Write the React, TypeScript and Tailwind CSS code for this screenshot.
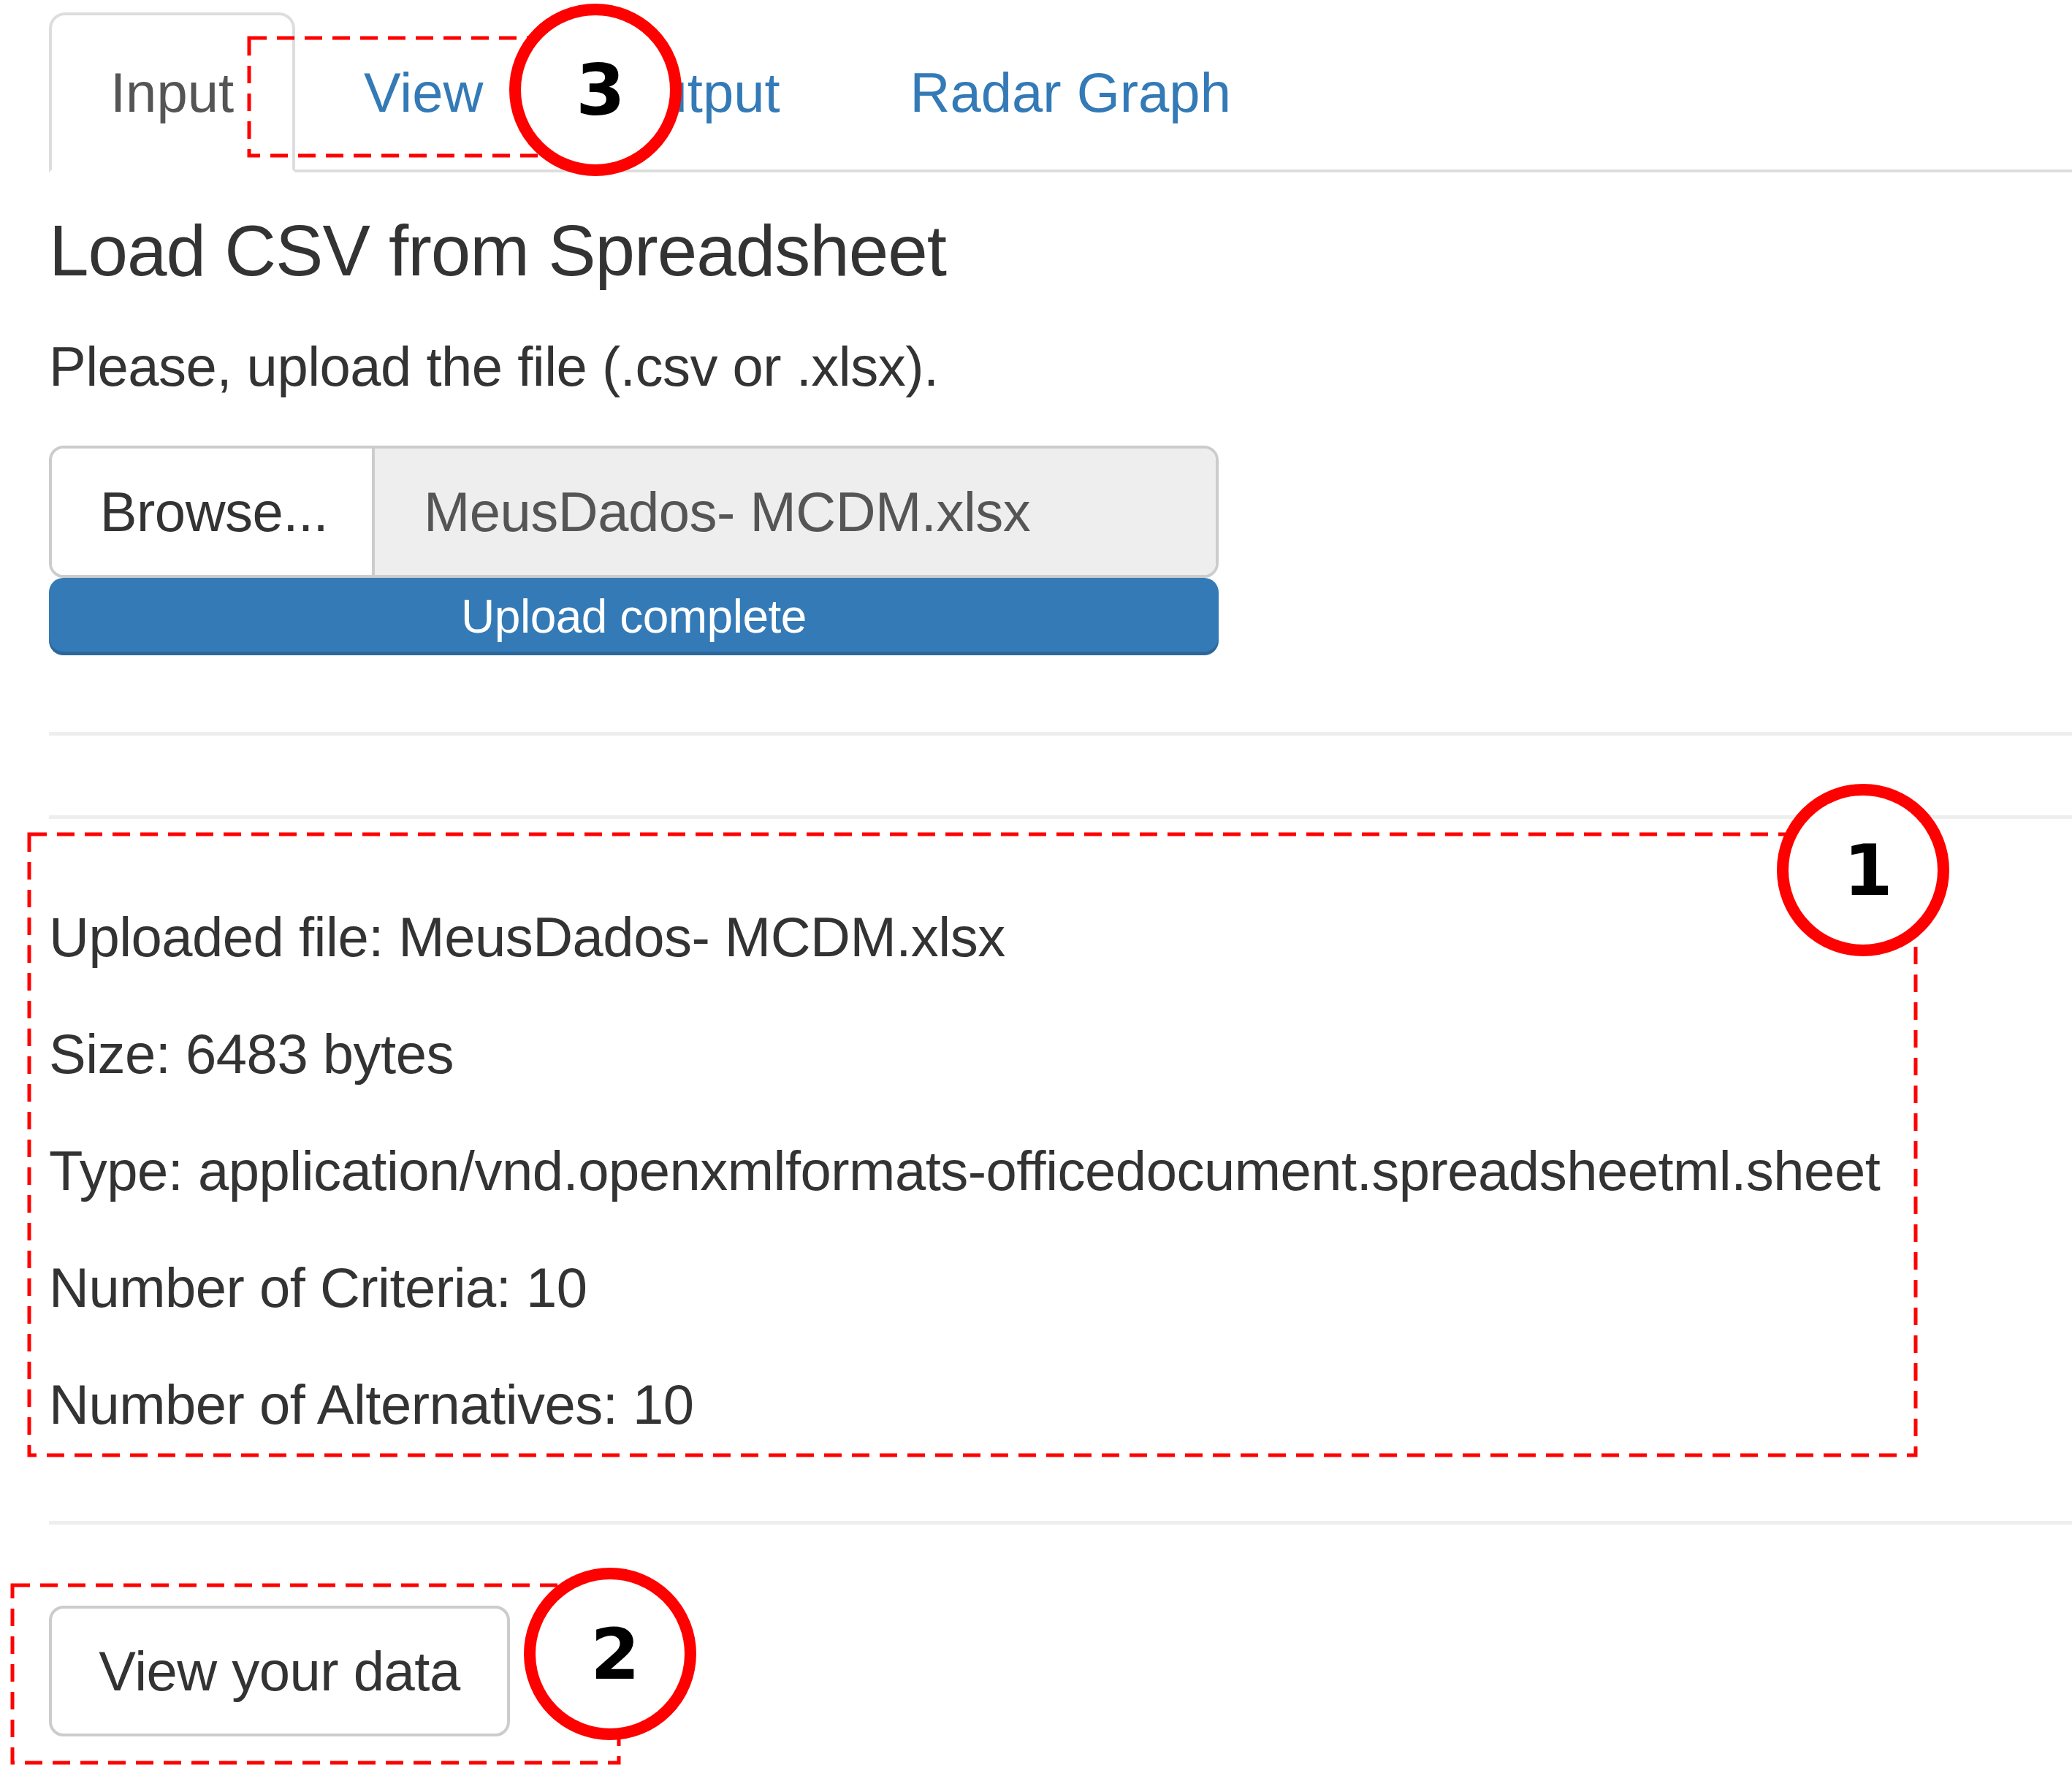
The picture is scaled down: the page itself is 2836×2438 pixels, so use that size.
import React from "react";

const tabs = ["Input", "View", "Output", "Radar Graph"];

const details = [
  "Uploaded file: MeusDados- MCDM.xlsx",
  "Size: 6483 bytes",
  "Type: application/vnd.openxmlformats-officedocument.spreadsheetml.sheet",
  "Number of Criteria: 10",
  "Number of Alternatives: 10",
];

function Marker({ n, className }: { n: string; className: string }) {
  return (
    <div
      className={`absolute w-[236px] h-[236px] rounded-full border-[16px] border-[#ff0000] bg-white flex items-center justify-center pl-[14px] ${className}`}
    >
      <span className="font-['DejaVu_Sans',sans-serif] font-bold text-[97px] leading-none tracking-normal text-black">{n}</span>
    </div>
  );
}

export default function App() {
  return (
    <div className="relative w-[2836px] h-[2438px] overflow-hidden bg-white font-['Liberation_Sans',Arial,sans-serif] tracking-[-0.5px] text-[#333]">
      <div className="pl-[67px]">
        {/* tabs */}
        <ul className="mt-[17px] flex border-b-[4px] border-[#ddd] tracking-normal">
          {tabs.map((t, i) => (
            <li key={t} className="-mb-[4px] mr-[10px]">
              <a
                className={
                  i === 0
                    ? "flex h-[219px] items-center px-[80px] border-[4px] border-[#ddd] border-b-white rounded-t-[22px] bg-white text-[76px] leading-[109px] text-[#555]"
                    : "flex h-[219px] items-center px-[80px] border-[4px] border-transparent text-[76px] leading-[109px] text-[#337ab7]"
                }
              >
                {t}
              </a>
            </li>
          ))}
        </ul>

        <h4 className="mt-[53px] text-[98px] leading-[108px] font-normal tracking-[-1px]">Load CSV from Spreadsheet</h4>
        <p className="mt-[50px] text-[76px] leading-[109px]">Please, upload the file (.csv or .xlsx).</p>

        {/* file input */}
        <div className="mt-[54px] w-[1601px]">
          <div className="flex h-[181px] rounded-[20px] border-[4px] border-[#ccc] overflow-hidden text-[76px] leading-[109px]">
            <div className="w-[442px] flex items-center justify-center pl-[6px] bg-white border-r-[4px] border-[#ccc]">Browse...</div>
            <div className="flex-1 flex items-center bg-[#eee] pl-[67px] text-[#555]">MeusDados- MCDM.xlsx</div>
          </div>
          <div className="h-[106px] rounded-[20px] bg-[#337ab7] shadow-[inset_0_-5px_0_rgba(0,0,0,0.15)] flex items-center justify-center text-white text-[64px] leading-none">
            Upload complete
          </div>
        </div>

        <div className="mt-[105px] h-[5px] bg-[#eee]" />
        <div className="mt-[109px] h-[5px] bg-[#eee]" />

        <div className="mt-[107px] flex flex-col gap-[51px] text-[76px] leading-[109px]">
          {details.map((d) => (
            <p key={d}>{d}</p>
          ))}
        </div>

        <div className="mt-[105px] h-[5px] bg-[#eee]" />

        <button className="mt-[111px] h-[179px] w-[631px] rounded-[20px] border-[4px] border-[#ccc] bg-white text-[76px] leading-[109px] text-[#333]">
          View your data
        </button>
      </div>

      {/* annotations */}
      <svg className="absolute left-0 top-0 pointer-events-none" width="2836" height="2438">
        <g fill="none" stroke="#ff0000" strokeWidth="5" strokeDasharray="24 14">
          <rect x="341" y="52" width="440" height="161" />
          <rect x="40" y="1142" width="2582" height="850" />
          <rect x="17" y="2170" width="830" height="243" />
        </g>
      </svg>
      <Marker n="3" className="left-[697px] top-[5px]" />
      <Marker n="1" className="left-[2432px] top-[1073px]" />
      <Marker n="2" className="left-[717px] top-[2146px]" />
    </div>
  );
}
